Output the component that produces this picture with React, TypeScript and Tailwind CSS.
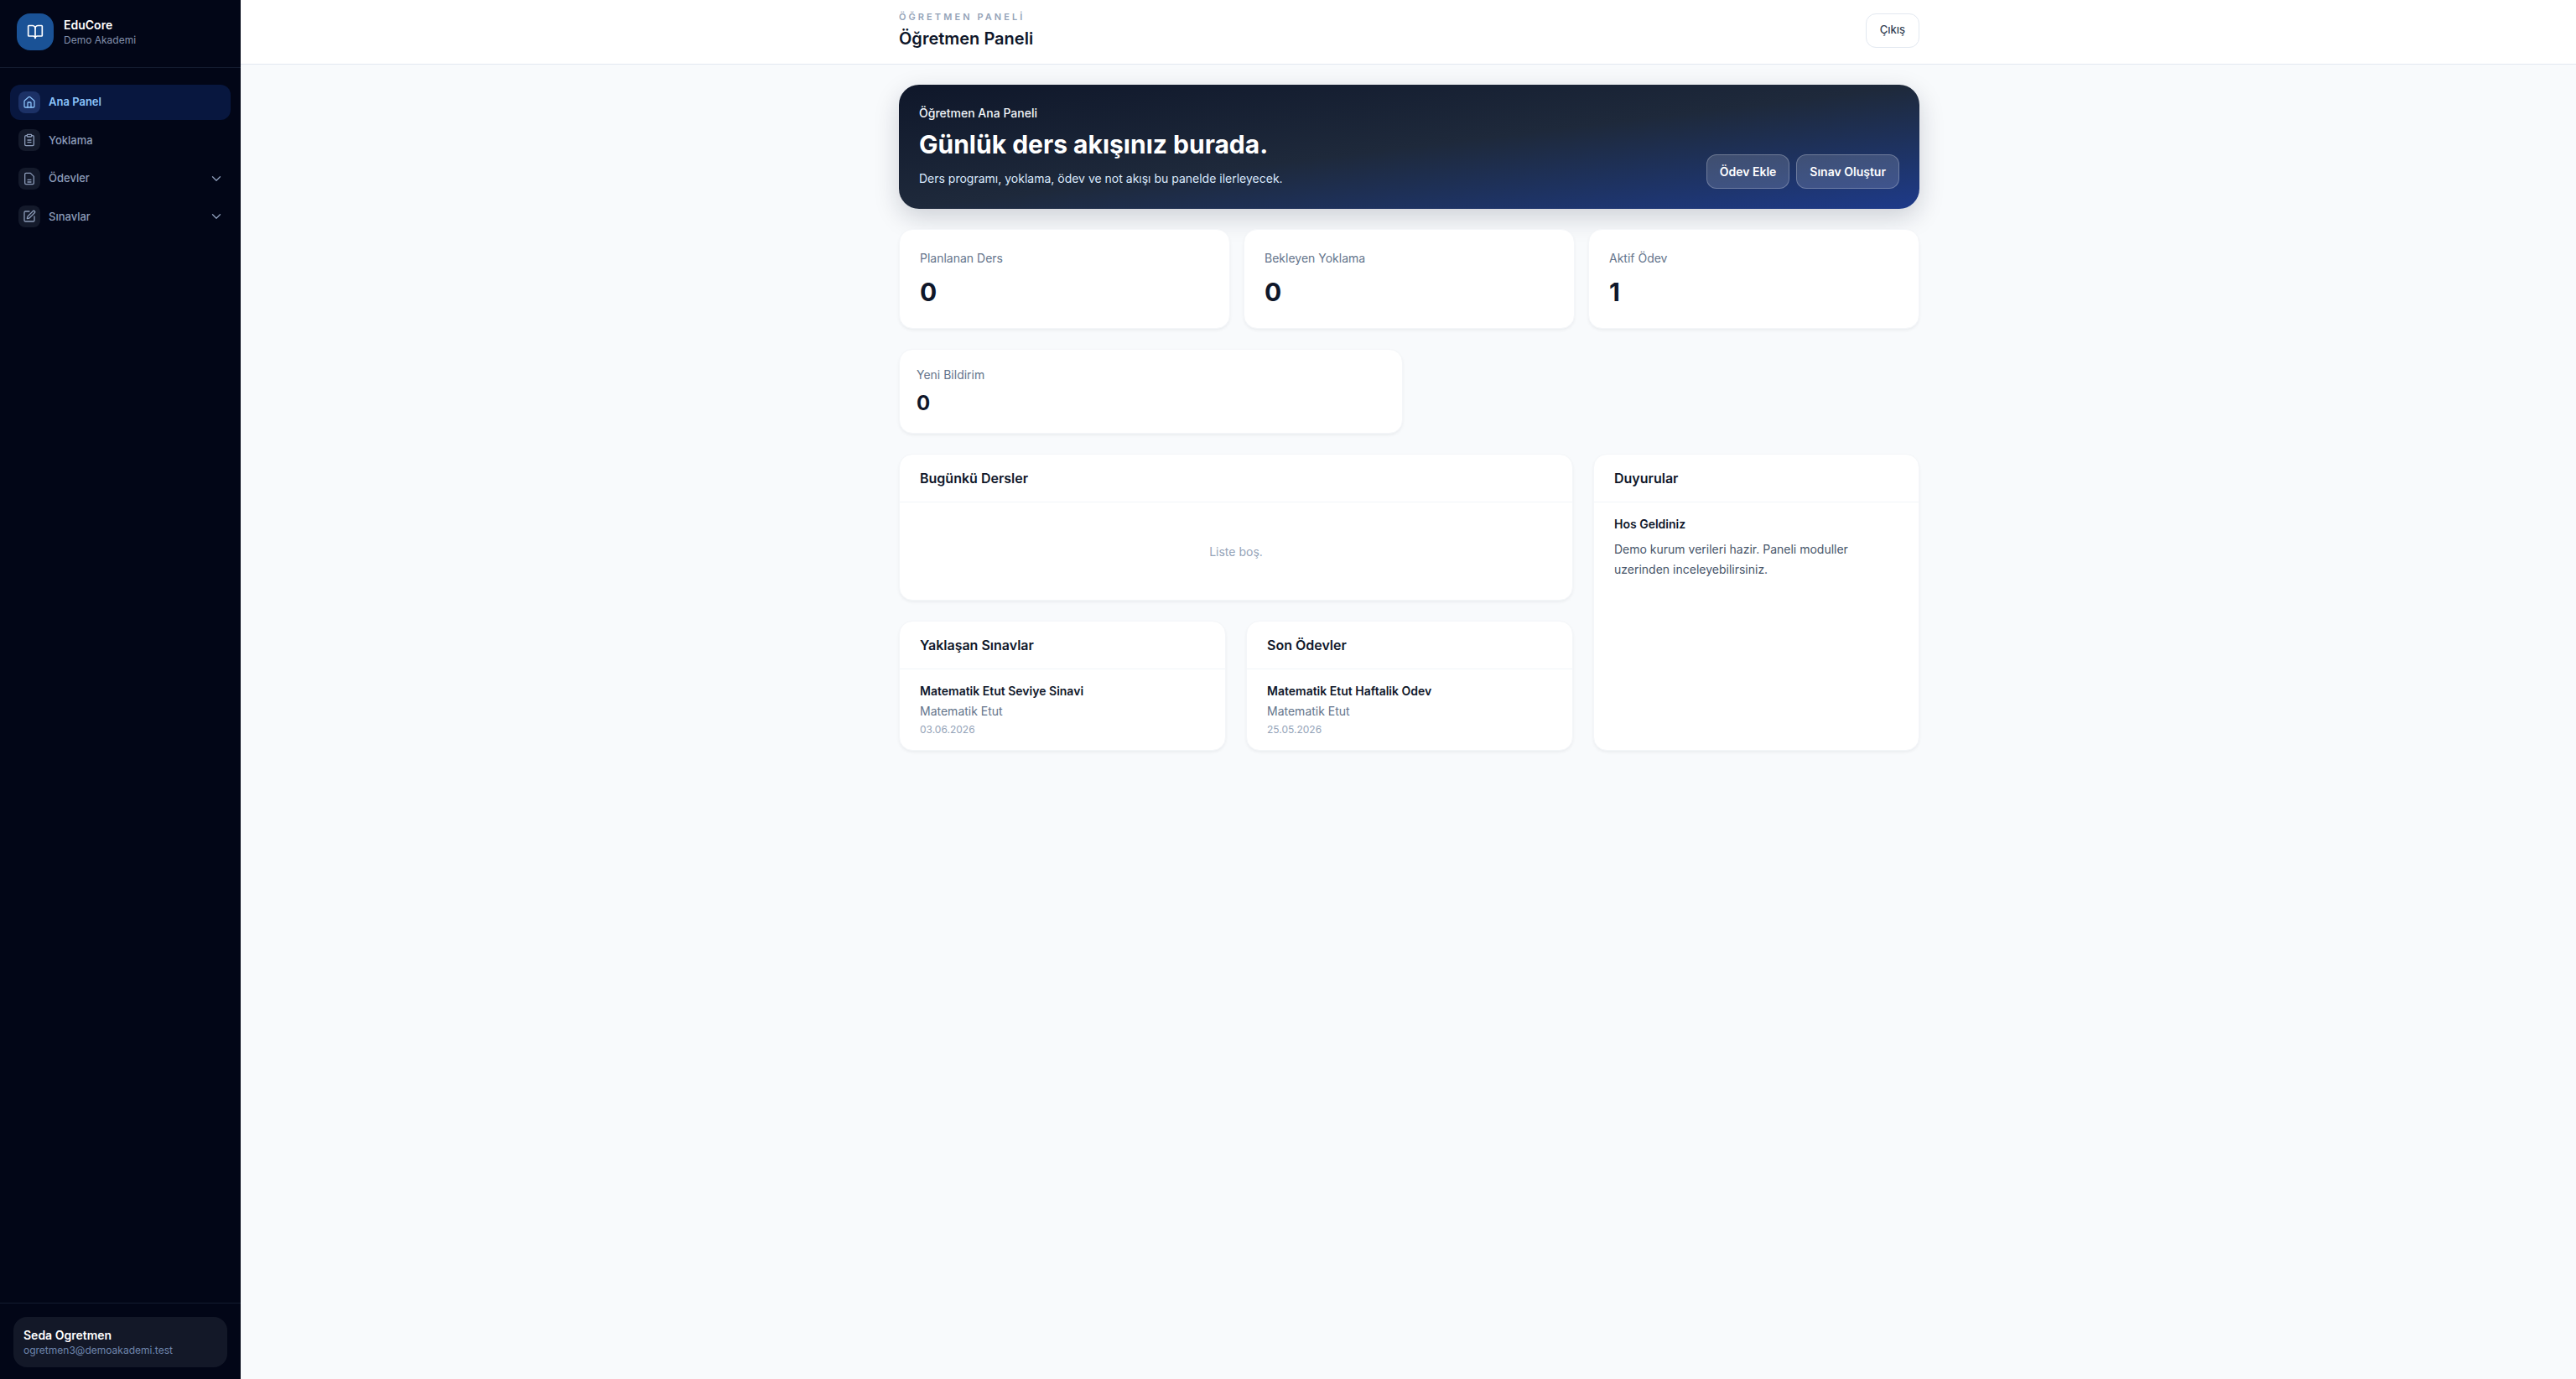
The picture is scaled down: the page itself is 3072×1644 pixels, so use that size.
import { BookOpen, ChevronDown, House, SquarePen } from "lucide-react";
import type { ReactNode } from "react";

function ClipboardIcon({ className }: { className?: string }) {
  return (
    <svg viewBox="0 0 24 24" fill="none" stroke="currentColor" strokeWidth="1.9" strokeLinecap="round" strokeLinejoin="round" className={className}>
      <rect x="8" y="2" width="8" height="4" rx="1" />
      <path d="M16 4h2a2 2 0 0 1 2 2v14a2 2 0 0 1-2 2H6a2 2 0 0 1-2-2V6a2 2 0 0 1 2-2h2" />
      <path d="M9 12h6" />
      <path d="M9 16h6" />
    </svg>
  );
}

function FileIcon({ className }: { className?: string }) {
  return (
    <svg viewBox="0 0 24 24" fill="none" stroke="currentColor" strokeWidth="1.9" strokeLinecap="round" strokeLinejoin="round" className={className}>
      <path d="M6 22a2 2 0 0 1-2-2V4a2 2 0 0 1 2-2h8l6 6v12a2 2 0 0 1-2 2Z" />
      <path d="M9 14h6" />
      <path d="M9 18h6" />
    </svg>
  );
}

type NavItem = {
  label: string;
  icon: ReactNode;
  active?: boolean;
  hasMenu?: boolean;
};

const navItems: NavItem[] = [
  { label: "Ana Panel", icon: <House className="h-[16px] w-[16px]" strokeWidth={1.9} />, active: true },
  { label: "Yoklama", icon: <ClipboardIcon className="h-[16px] w-[16px]" /> },
  { label: "Ödevler", icon: <FileIcon className="h-[16px] w-[16px]" />, hasMenu: true },
  { label: "Sınavlar", icon: <SquarePen className="h-[16px] w-[16px]" strokeWidth={1.9} />, hasMenu: true },
];

function Sidebar() {
  return (
    <aside className="flex w-[287px] shrink-0 flex-col bg-[#020617]">
      <div className="flex h-[81px] items-center gap-[12px] border-b border-[#141c30] px-[20px] pb-[4px]">
        <div className="flex h-[44px] w-[44px] items-center justify-center rounded-[16px] bg-[#1a5296]">
          <BookOpen className="h-[20px] w-[20px] text-white" strokeWidth={2} />
        </div>
        <div>
          <div className="text-[14px] leading-[20px] font-semibold text-white">EduCore</div>
          <div className="text-[12px] leading-[16px] text-[#8290ac]">Demo Akademi</div>
        </div>
      </div>
      <nav className="flex flex-col gap-[4px] px-[12px] pt-[20px]">
        {navItems.map((item) => (
          <div
            key={item.label}
            className={
              item.active
                ? "flex h-[41.5px] items-center gap-[10px] rounded-[12px] bg-[#08173f] pr-[8px] pl-[10px]"
                : "flex h-[41.5px] items-center gap-[10px] rounded-[12px] pr-[8px] pl-[10px]"
            }
          >
            <span
              className={
                item.active
                  ? "flex h-[26px] w-[26px] items-center justify-center rounded-[8px] bg-[#1c3166] text-[#8cc4fb]"
                  : "flex h-[26px] w-[26px] items-center justify-center rounded-[8px] bg-[#141a2b] text-[#8d9dba]"
              }
            >
              {item.icon}
            </span>
            <span
              className={
                item.active
                  ? "flex-1 text-[13px] font-semibold text-[#8cc4fb]"
                  : "flex-1 text-[13px] font-medium text-[#8d9dba]"
              }
            >
              {item.label}
            </span>
            {item.hasMenu && <ChevronDown className="h-[18px] w-[18px] text-[#8d9dba]" strokeWidth={1.7} />}
          </div>
        ))}
      </nav>
      <div className="mt-auto border-t border-[#141c30] px-[16px] pt-[16px] pb-[14px]">
        <div className="flex h-[60px] flex-col justify-center rounded-[16px] bg-[#131828] px-[12px]">
          <div className="text-[14px] leading-[20px] font-semibold text-white">Seda Ogretmen</div>
          <div className="text-[12px] leading-[16px] text-[#6f86ad]">ogretmen3@demoakademi.test</div>
        </div>
      </div>
    </aside>
  );
}

function StatCard({ label, value, small }: { label: string; value: string; small?: boolean }) {
  return (
    <div
      className={
        small
          ? "h-[101px] rounded-[16px] border border-[#f4f6f9] bg-white px-[20px] pt-[20px] shadow-[0_2px_4px_-1px_rgba(15,23,42,0.08)]"
          : "h-[119px] rounded-[16px] border border-[#f4f6f9] bg-white px-[24px] pt-[24px] shadow-[0_2px_4px_-1px_rgba(15,23,42,0.08)]"
      }
    >
      <div className="text-[14px] leading-[20px] text-[#64748b]">{label}</div>
      <div
        className={
          small
            ? "mt-[8px] text-[24px] leading-[32px] font-bold text-[#0f172a]"
            : "mt-[12px] text-[30px] leading-[36px] font-bold text-[#0f172a]"
        }
      >
        {value}
      </div>
    </div>
  );
}

function Panel({ title, children, className }: { title: string; children: ReactNode; className?: string }) {
  return (
    <section className={"flex flex-col rounded-[16px] border border-[#f4f6f9] bg-white shadow-[0_2px_4px_-1px_rgba(15,23,42,0.08)] " + (className ?? "")}>
      <div className="flex h-[57px] items-center border-b border-[#f1f5f9] px-[24px]">
        <h2 className="text-[16px] font-semibold text-[#0f172a]">{title}</h2>
      </div>
      {children}
    </section>
  );
}

function ListEntry({ title, course, date }: { title: string; course: string; date: string }) {
  return (
    <div className="px-[24px] py-[16px]">
      <div className="text-[14px] leading-[20px] font-semibold text-[#0f172a]">{title}</div>
      <div className="mt-[4px] text-[14px] leading-[20px] text-[#64748b]">{course}</div>
      <div className="mt-[4px] text-[12px] leading-[16px] text-[#94a3b8]">{date}</div>
    </div>
  );
}

export default function App() {
  return (
    <div className="flex min-h-[1644px] bg-[#f8fafc] font-['Inter',sans-serif]">
      <Sidebar />
      <div className="flex min-w-0 flex-1 flex-col">
        <header className="h-[77px] border-b border-[#e2e8f0] bg-white">
          <div className="ml-[785px] flex h-full w-[1217px] items-center justify-between pb-[4px]">
            <div>
              <div className="text-[11px] leading-[16px] font-semibold tracking-[0.28em] text-[#94a3b8]">ÖĞRETMEN PANELİ</div>
              <div className="mt-[4px] text-[20px] leading-[28px] font-semibold text-[#0f172a]">Öğretmen Paneli</div>
            </div>
            <button className="h-[41px] rounded-[12px] border border-[#e2e8f0] bg-white px-[16px] text-[13px] font-medium text-[#334155]">
              Çıkış
            </button>
          </div>
        </header>
        <main className="ml-[785px] flex w-[1217px] flex-col gap-[24px] pt-[24px]">
          <div className="flex h-[148px] items-end justify-between rounded-[24px] bg-gradient-to-br from-[#0f172a] via-[#1e293b] to-[#1e3a8a] p-[24px] shadow-[0_10px_30px_rgba(15,23,42,0.18)]">
            <div className="self-start">
              <div className="text-[14px] leading-[20px] font-medium text-[#f1f5f9]">Öğretmen Ana Paneli</div>
              <h1 className="mt-[8px] text-[30px] leading-[38px] font-bold text-white">Günlük ders akışınız burada.</h1>
              <p className="mt-[12px] text-[14px] leading-[20px] text-[#dbeafe]">Ders programı, yoklama, ödev ve not akışı bu panelde ilerleyecek.</p>
            </div>
            <div className="flex gap-[8px]">
              <button className="h-[41px] rounded-[12px] border border-white/25 bg-white/15 px-[15px] text-[14px] font-semibold text-white">Ödev Ekle</button>
              <button className="h-[41px] rounded-[12px] border border-white/25 bg-white/15 px-[15px] text-[14px] font-semibold text-white">Sınav Oluştur</button>
            </div>
          </div>
          <div className="grid grid-cols-3 gap-[16px]">
            <StatCard label="Planlanan Ders" value="0" />
            <StatCard label="Bekleyen Yoklama" value="0" />
            <StatCard label="Aktif Ödev" value="1" />
          </div>
          <div className="grid grid-cols-2 gap-[16px]">
            <StatCard label="Yeni Bildirim" value="0" small />
          </div>
          <div className="grid grid-cols-[804px_389px] gap-[24px]">
            <div className="flex flex-col gap-[24px]">
              <Panel title="Bugünkü Dersler" className="h-[175px]">
                <div className="flex flex-1 items-center justify-center text-[14px] text-[#94a3b8]">Liste boş.</div>
              </Panel>
              <div className="grid grid-cols-2 gap-[24px]">
                <Panel title="Yaklaşan Sınavlar">
                  <ListEntry title="Matematik Etut Seviye Sinavi" course="Matematik Etut" date="03.06.2026" />
                </Panel>
                <Panel title="Son Ödevler">
                  <ListEntry title="Matematik Etut Haftalik Odev" course="Matematik Etut" date="25.05.2026" />
                </Panel>
              </div>
            </div>
            <Panel title="Duyurular">
              <div className="px-[24px] pt-[16px]">
                <div className="text-[14px] leading-[20px] font-semibold text-[#0f172a]">Hos Geldiniz</div>
                <p className="mt-[8px] text-[14px] leading-[24px] text-[#475569]">Demo kurum verileri hazir. Paneli moduller uzerinden inceleyebilirsiniz.</p>
              </div>
            </Panel>
          </div>
        </main>
      </div>
    </div>
  );
}
